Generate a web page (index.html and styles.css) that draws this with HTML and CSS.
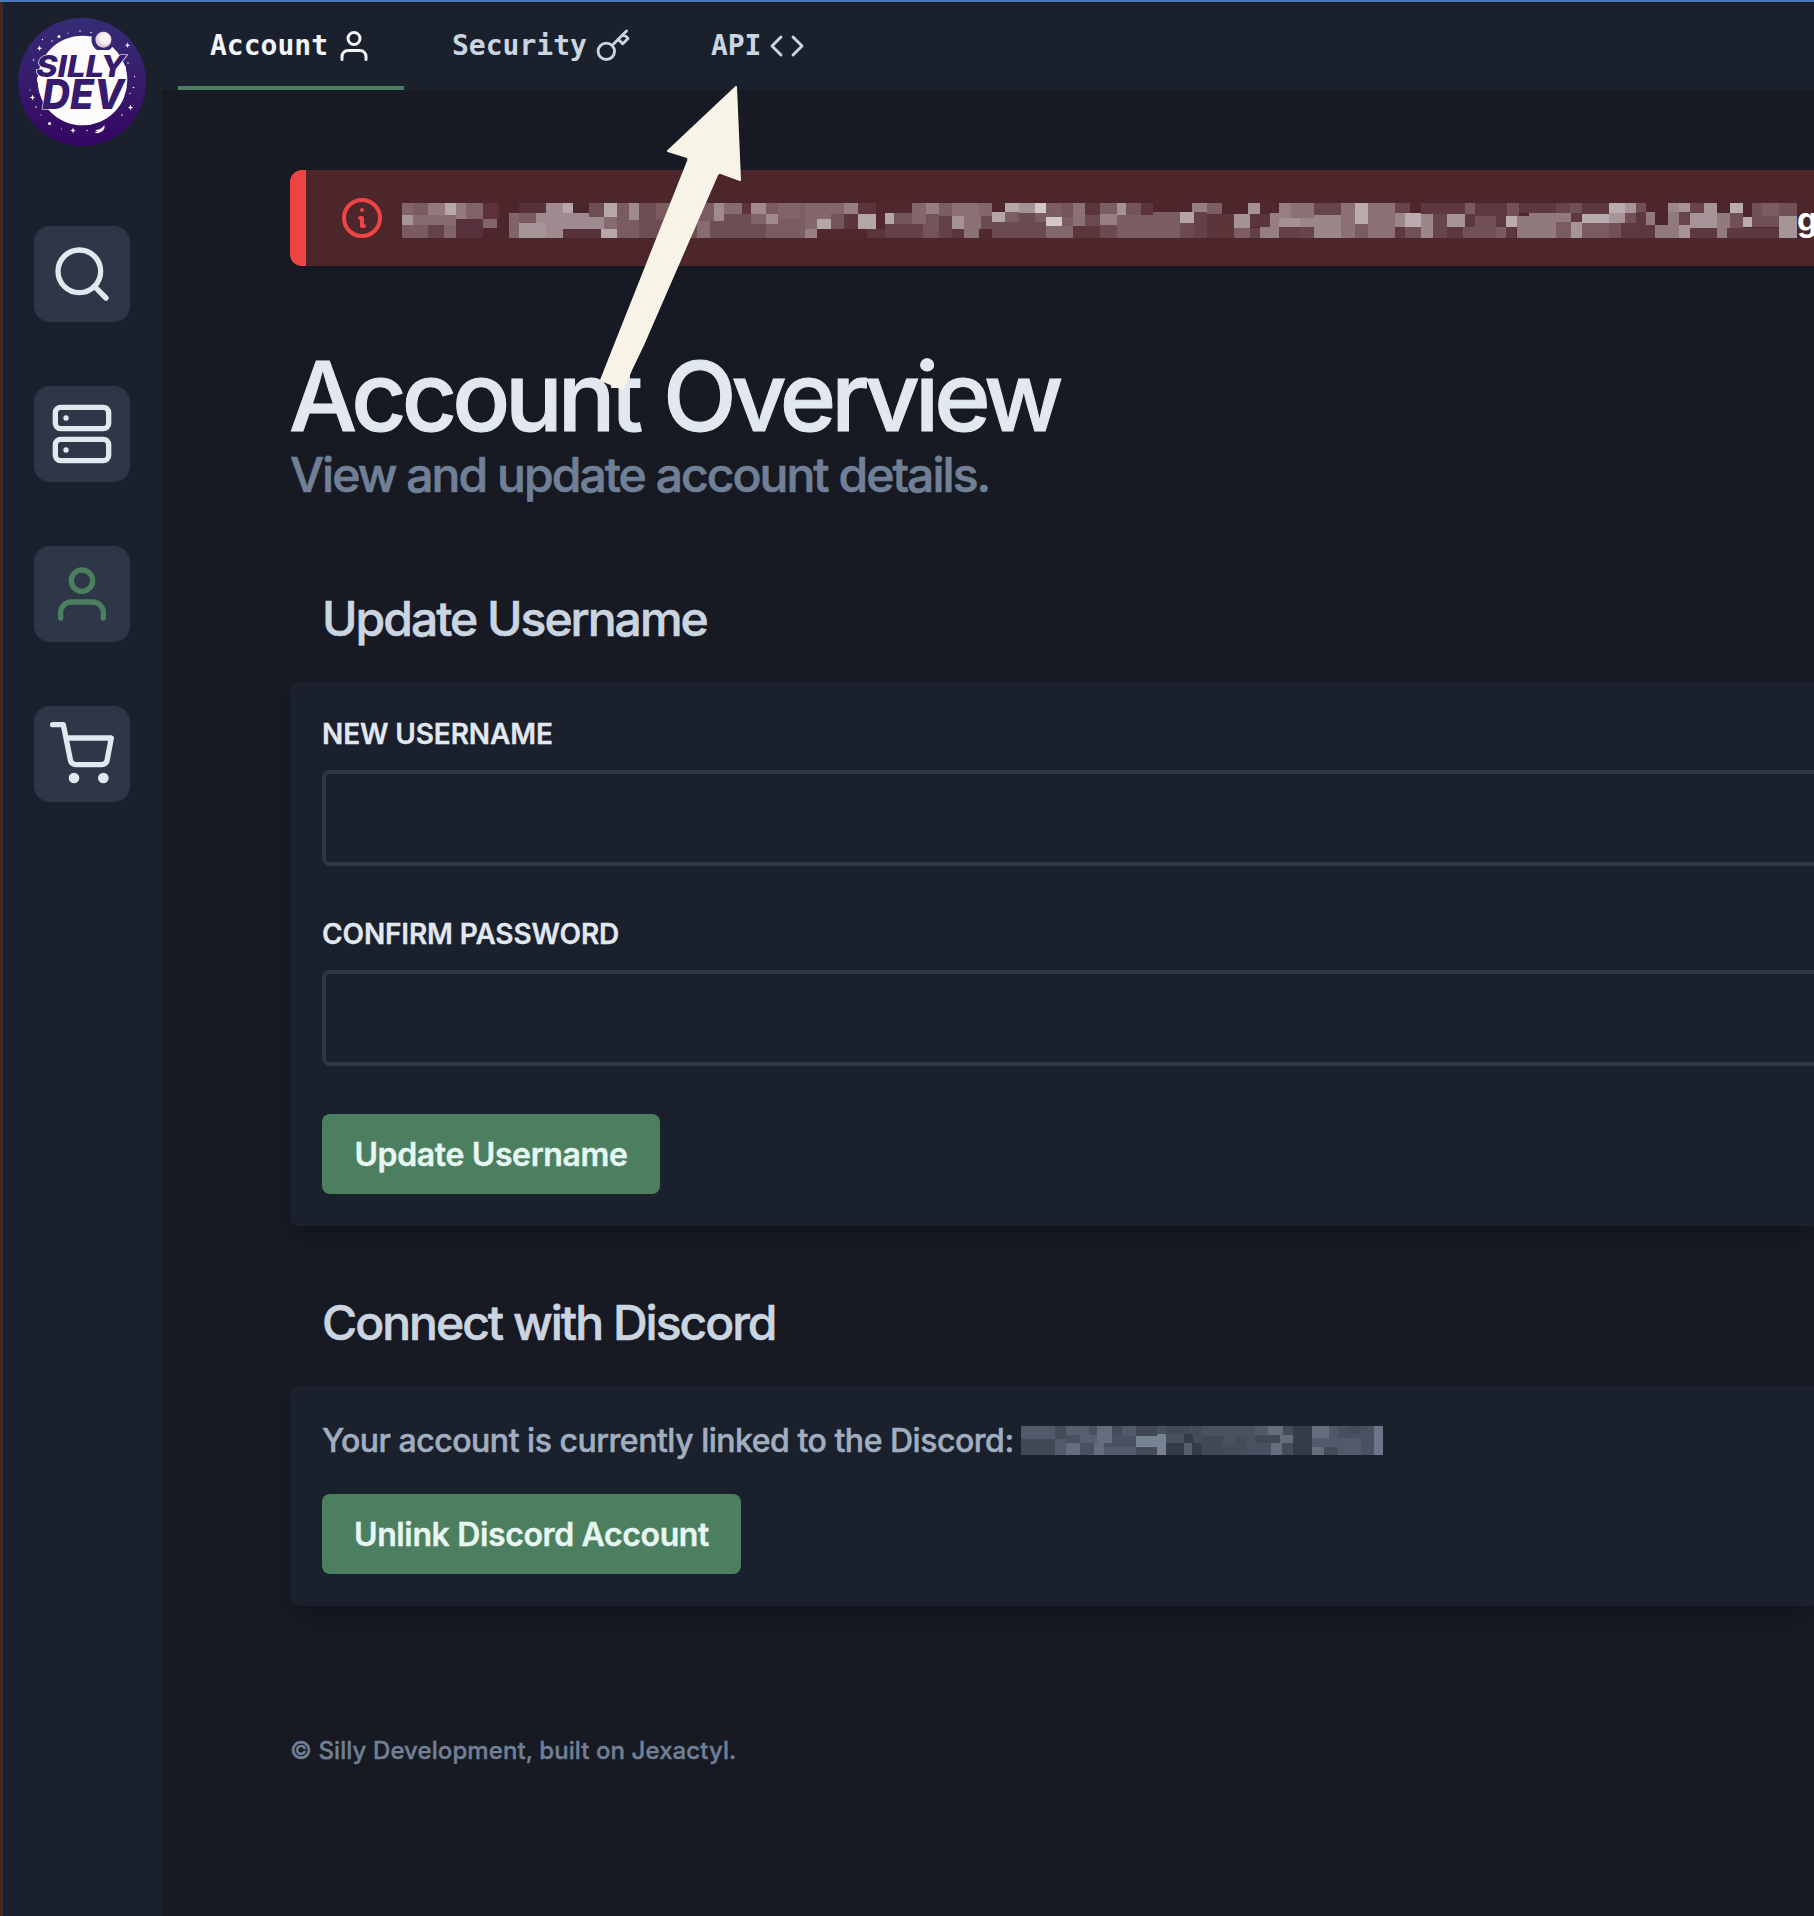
FILE: index.html
```html
<!DOCTYPE html>
<html lang="en">
<head>
<meta charset="utf-8">
<title>Account Overview</title>
<link rel="stylesheet" href="styles.css">
</head>
<body>
<div class="app">
  <aside class="sidebar">
    <svg class="logo" viewBox="18 18 128 128">
      <defs>
        <linearGradient id="sky" x1="0" y1="0" x2="0" y2="1"><stop offset="0" stop-color="#352d76"/><stop offset=".5" stop-color="#371b6c"/><stop offset="1" stop-color="#350563"/></linearGradient>
        <radialGradient id="moon" cx=".6" cy=".4" r=".6"><stop offset=".4" stop-color="#fbf5f6"/><stop offset="1" stop-color="#dcc3cf"/></radialGradient>
      </defs>
      <circle cx="82" cy="82" r="64" fill="url(#sky)"/>
      <circle cx="82.5" cy="80.5" r="44.8" fill="#fdfafc"/>
      <circle cx="103" cy="40" r="11.5" fill="#352a74"/>
      <circle cx="103.4" cy="39.7" r="8" fill="url(#moon)"/>
      <path d="M45 56L54 50H112L126 67V77L115 98L100 118H62L48 109L57 106L60 82H37V77H55L40 68Z" fill="#fdfafc"/>
      <g class="logo-text">
        <text transform="translate(36 76.500)" font-size="30" textLength="89" lengthAdjust="spacingAndGlyphs">SILLY</text>
        <text transform="translate(42 108.800)" font-size="41" textLength="82" lengthAdjust="spacingAndGlyphs">DEV</text>
      </g>
      <g fill="#f4effa">
        <circle cx="59" cy="36.500" r="1.600"/><circle cx="49.500" cy="123.500" r="1.600"/><circle cx="80" cy="31" r=".8"/><circle cx="91" cy="32.500" r=".8"/><circle cx="52" cy="41" r=".8"/><circle cx="42.500" cy="39.500" r=".7"/><circle cx="33.500" cy="60" r=".8"/><circle cx="128" cy="63" r=".8"/><circle cx="134.500" cy="76.500" r=".7"/><circle cx="133.500" cy="87.500" r=".8"/><circle cx="130" cy="93.500" r=".7"/><circle cx="36" cy="107" r=".8"/><circle cx="41" cy="115" r=".6"/><circle cx="122" cy="115" r=".8"/><circle cx="30" cy="90" r=".6"/><circle cx="61.500" cy="129" r=".6"/><circle cx="87" cy="130.500" r=".7"/><circle cx="68" cy="33" r=".6"/>
        <path d="M39.500 45.500l.8 2 2 .8-2 .8-.8 2-.8-2-2-.8 2-.8zM127.500 42.500l.8 2 2 .8-2 .8-.8 2-.8-2-2-.8 2-.8zM32.500 94.500l.8 2.200 2 .8-2 .8-.8 2.200-.8-2.200-2-.8 2-.8zM130.500 104.500l.8 2.200 2 .8-2 .8-.8 2.200-.8-2.200-2-.8 2-.8zM73 127.500l.8 2.200 2 .8-2 .8-.8 2.200-.8-2.200-2-.8 2-.8zM104.500 125q1 6-6 8-2 .6-4-.8l3-.6-2.500-1.600q6 0 9.500-5z"/>
      </g>
    </svg>
    <nav class="side-nav">
      <a class="side-link"><svg class="icon" viewBox="0 0 24 24"><circle cx="11" cy="11" r="8"/><path d="M21 21l-4.350-4.350"/></svg></a>
      <a class="side-link"><svg class="icon" viewBox="0 0 24 24"><rect x="2" y="2" width="20" height="8" rx="2"/><rect x="2" y="14" width="20" height="8" rx="2"/><path d="M6 6h.01M6 18h.01"/></svg></a>
      <a class="side-link active"><svg class="icon" viewBox="0 0 24 24"><path d="M20 21v-2a4 4 0 0 0-4-4H8a4 4 0 0 0-4 4v2"/><circle cx="12" cy="7" r="4"/></svg></a>
      <a class="side-link"><svg class="icon" viewBox="0 0 24 24"><circle cx="9" cy="21" r="1"/><circle cx="20" cy="21" r="1"/><path d="M1 1h4l2.680 13.390a2 2 0 0 0 2 1.610h9.720a2 2 0 0 0 2-1.610L23 6H6"/></svg></a>
    </nav>
  </aside>
  <div class="page">
    <header class="tabs">
      <a class="tab current"><span>Account</span><svg class="icon" viewBox="0 0 24 24"><path d="M20 21v-2a4 4 0 0 0-4-4H8a4 4 0 0 0-4 4v2"/><circle cx="12" cy="7" r="4"/></svg></a>
      <a class="tab"><span>Security</span><svg class="icon thin" viewBox="0 0 24 24"><path d="M21 2l-2 2m-7.610 7.610a5.500 5.500 0 1 1-7.778 7.778 5.500 5.500 0 0 1 7.777-7.777zm0 0L15.500 7.500m0 0l3 3L22 7l-3-3m-3.500 3.500L19 4"/></svg></a>
      <a class="tab"><span>API</span><svg class="icon thin" viewBox="0 0 24 24"><path d="M16 18l6-6-6-6M8 6l-6 6 6 6"/></svg></a>
    </header>
    <main class="content">
      <div class="alert">
        <svg class="icon alert-icon" viewBox="0 0 24 24"><path d="M13 16h-1v-4h-1m1-4h.01M21 12a9 9 0 1 1-18 0 9 9 0 0 1 18 0z"/></svg>
        <svg class="censor-alert" viewBox="0 0 4185 105" shape-rendering="crispEdges">
          <g transform="translate(-366 -159)">
            <path fill="#80646a" d="M366 159H399V195H366zM687 189H717V264H687zM1494 159H1560V207H1494zM558 159H609V207H558zM492 225H528V264H492zM609 207H651V234H609zM1413 192H1458V222H1413z"/>
            <path fill="#7a5b60" d="M399 159H444V195H399zM366 225H444V264H366zM717 189H768V219H717zM1011 159H1077V264H1011zM1128 159H1302V213H1128zM1458 159H1494V192H1458zM1458 222H1560V264H1458zM1494 207H1560V222H1494z"/>
            <path fill="#937a7f" d="M444 159H495V195H444zM528 159H558V207H528z"/>
            <path fill="#b5a7aa" d="M495 159H528V195H495zM849 159H879V189H849zM972 159H1011V201H972zM963 237H1011V264H963z"/>
            <path fill="#5c3138" d="M609 159H657V207H609zM1386 159H1413V192H1386z"/>
            <path fill="#56303a" d="M528 207H609V264H528zM717 159H798V189H717zM849 237H963V264H849z"/>
            <path fill="#a79699" d="M366 195H399V225H366zM717 219H798V264H717z"/>
            <path fill="#866b70" d="M399 195H528V225H399zM972 201H1011V237H972zM1251 213H1290V264H1251zM1332 159H1386V192H1332z"/>
            <path fill="#64424a" d="M444 225H492V264H444z"/>
            <path fill="#9f8b8f" d="M768 189H798V219H768zM798 159H849V264H798zM849 189H927V237H849zM927 201H972V237H927zM1047 159H1077V210H1047zM1302 159H1332V213H1302zM1413 159H1458V192H1413zM1458 192H1494V222H1458z"/>
            <path fill="#6d4e53" d="M927 159H972V201H927zM1077 159H1128V264H1077zM1128 210H1251V264H1128zM1290 213H1332V264H1290zM1332 192H1413V264H1332zM1413 222H1458V264H1413z"/>
          </g>
          <g transform="translate(1194 -159)">
            <path fill="#7c5d62" d="M0 159H15V264H0zM417 159H456V198H417zM615 186H657V216H615zM705 189H738V216H705zM738 159H786V201H738zM786 201H819V228H786zM900 159H951V192H900zM951 195H1059V264H951zM1059 186H1140V264H1059zM1221 159H1266V192H1221zM1302 234H1350V264H1302z"/>
            <path fill="#83676b" d="M15 159H132V192H15zM15 192H51V237H15zM51 192H93V207H51zM336 159H378V222H336zM738 228H819V264H738zM537 159H576V198H537z"/>
            <path fill="#967f83" d="M132 159H174V192H132zM15 237H51V264H15zM378 159H417V192H378zM1176 159H1221V186H1176zM900 192H951V225H900zM1380 231H1437V264H1380zM1410 189H1437V231H1410zM1437 159H1473V204H1437z"/>
            <path fill="#b3a5a8" d="M51 207H93V237H51zM174 192H228V237H174zM255 189H282V222H255zM576 186H615V216H576zM615 159H657V186H615zM1140 186H1182V219H1140z"/>
            <path fill="#73545a" d="M93 192H132V237H93zM282 189H336V222H282zM369 222H417V264H369zM378 192H417V222H378zM786 159H819V201H786zM978 159H1023V195H978z"/>
            <path fill="#5c353b" d="M132 192H174V237H132zM201 237H255V264H201zM456 237H492V264H456zM819 228H900V264H819zM1023 159H1059V195H1023zM855 159H900V195H855zM1221 192H1302V264H1221zM1350 192H1410V231H1350zM174 159H228V192H174z"/>
            <path fill="#50272d" d="M51 237H201V264H51zM228 159H336V189H228zM537 237H576V264H537zM1380 159H1437V189H1380zM228 189H255V237H228z"/>
            <path fill="#644147" d="M255 222H369V264H255zM417 198H456V264H417zM1182 186H1221V264H1182zM1350 234H1380V264H1350zM1437 231H1542V264H1437z"/>
            <path fill="#6b4a50" d="M543 198H576V237H543zM576 216H738V264H576zM657 186H705V216H657zM855 195H900V228H855zM900 225H951V264H900zM1140 219H1182V264H1140zM1542 159H1560V195H1542z"/>
            <path fill="#8b7074" d="M456 159H537V198H456zM492 198H543V237H492zM492 237H537V264H492zM819 159H855V228H819zM1473 159H1542V204H1473z"/>
            <path fill="#a59296" d="M456 198H492V237H456zM657 159H705V189H657zM951 159H978V195H951zM1302 192H1350V234H1302zM1344 159H1380V192H1344zM1437 204H1542V231H1437zM1542 195H1560V264H1542z"/>
            <path fill="#d2c7ca" d="M705 159H738V189H705zM738 201H786V228H738z"/>
          </g>
          <g transform="translate(2694 -159)">
            <path fill="#8b7175" d="M0 159H42V204H0zM123 159H165V264H123zM204 159H285V264H204zM165 222H204V264H165z"/>
            <path fill="#9b868a" d="M0 204H42V231H0zM42 195H123V264H42zM285 189H315V231H285zM363 192H399V264H363zM1104 159H1137V186H1104z"/>
            <path fill="#67454b" d="M0 231H42V264H0zM42 159H123V195H42zM285 159H330V189H285zM768 159H810V189H768zM399 192H441V264H399zM1137 186H1170V225H1137zM1170 159H1212V189H1170z"/>
            <path fill="#795b60" d="M165 222H204V264H165zM768 216H813V264H768zM846 219H927V264H846zM588 231H618V264H588zM495 159H525V192H495zM1386 159H1437V198H1386z"/>
            <path fill="#b9abae" d="M165 159H204V222H165zM315 189H363V231H315zM846 192H927V219H846zM927 159H975V189H927zM1290 159H1329V189H1290zM1329 201H1356V231H1329zM618 198H651V231H618z"/>
            <path fill="#5d383e" d="M285 231H315V264H285zM399 159H495V192H399zM525 159H621V198H525zM495 192H525V231H495zM363 159H399V192H363zM441 231H489V264H441zM588 198H618V231H588zM618 231H648V264H618zM657 159H768V189H657zM813 189H846V216H813zM846 159H927V192H846zM963 219H1065V264H963zM1008 186H1038V219H1008zM1170 234H1251V264H1170zM1281 234H1443V264H1281z"/>
            <path fill="#715157" d="M315 231H363V264H315zM525 198H588V231H525zM489 231H588V264H489zM621 159H657V198H621zM810 159H846V189H810zM927 219H963V264H927zM975 189H1008V219H975zM1008 159H1038V186H1008zM1290 189H1329V234H1290zM1356 159H1386V198H1356zM1356 198H1437V231H1356zM1437 159H1491V198H1437z"/>
            <path fill="#a69498" d="M441 192H495V231H441zM813 216H846V264H813zM927 189H975V219H927zM975 159H1008V189H975zM1137 159H1170V186H1137zM1170 189H1251V234H1170zM1212 159H1251V189H1212zM1137 225H1170V264H1137zM1437 198H1491V264H1437z"/>
            <path fill="#917a7d" d="M651 198H768V264H651zM687 189H813V216H687zM1038 186H1065V225H1038zM1065 225H1137V264H1065zM1104 186H1137V225H1104zM1251 189H1290V234H1251zM1251 234H1281V264H1251z"/>
          </g>
        </svg>
        <span class="alert-text">g</span>
      </div>
      <h1 class="title">Account Overview</h1>
      <p class="subtitle">View and update account details.</p>

      <h2 class="section-title username-title">Update Username</h2>
      <section class="card">
        <label class="label">New Username</label>
        <div class="input"></div>
        <label class="label">Confirm Password</label>
        <div class="input"></div>
        <button class="button update">Update Username</button>
      </section>

      <h2 class="section-title discord-title">Connect with Discord</h2>
      <section class="card">
        <p class="linked"><span>Your account is currently linked to the Discord:</span>
          <svg class="censor-name" viewBox="123 168 1086 87" shape-rendering="crispEdges">
            <path fill="#485160" d="M123 168H1209V255H123z"/>
            <path fill="#525a69" d="M123 168H225V207H123zM225 207H258V255H225zM426 168H468V198H426zM372 231H468V255H372zM825 168H864V195H825zM996 204H1143V255H996zM1047 168H1074V204H1047z"/>
            <path fill="#404954" d="M123 207H225V255H123zM468 168H531V198H468zM558 168H630V192H558zM666 198H729V255H666zM825 195H900V219H825z"/>
            <path fill="#464b59" d="M225 168H258V207H225zM468 231H531V255H468zM396 168H426V198H396zM639 168H666V219H639zM1104 168H1143V192H1104zM1032 231H1074V255H1032zM906 219H939V255H906zM909 168H939V195H909zM729 222H801V255H729zM765 198H801V222H765z"/>
            <path fill="#575f6e" d="M258 168H327V195H258zM300 195H351V219H300zM612 219H636V255H612z"/>
            <path fill="#656d7c" d="M258 219H300V255H258zM351 168H396V219H351zM342 219H372V255H342zM864 168H909V195H864zM900 195H939V219H900zM873 219H906V255H873zM996 168H1047V204H996zM996 231H1032V255H996z"/>
            <path fill="#363b49" d="M558 219H612V255H558zM612 192H639V219H612zM636 219H666V255H636zM939 168H996V255H939z"/>
            <path fill="#768391" d="M468 198H531V231H468zM531 192H558V255H531z"/>
            <path fill="#6c7587" d="M1182 168H1209V255H1182z"/>
          </svg>
        </p>
        <button class="button unlink">Unlink Discord Account</button>
      </section>
      <footer class="footer">© Silly Development, built on Jexactyl.</footer>
    </main>
  </div>
</div>
<svg class="arrow" viewBox="590 80 160 320"><path d="M736 87L668 151L687 157Q689 158 688 161L601 380L623 389L631 370L643 345L717 175Q719 172 721 173L740 180Z" fill="#f7f3e6" stroke="#f7f3e6" stroke-width="2" stroke-linejoin="round"/></svg>
</body>
</html>
```
FILE: styles.css
```css
* { box-sizing: border-box; margin: 0; padding: 0; }
body {
  height: 1916px;
  overflow: hidden;
  background: #171923;
  font-family: Inter, "Liberation Sans", sans-serif;
  border-top: 2px solid #4a7ab5;
}
.app {
  display: flex;
  height: 1914px;
  border-left: 2px solid #55230d;
}
.icon {
  fill: none;
  stroke: currentColor;
  stroke-width: 2;
  stroke-linecap: round;
  stroke-linejoin: round;
  flex: none;
}

/* sidebar */
.sidebar {
  flex: none;
  width: 160px;
  background: #1a202c;
  box-shadow: inset 1px 0 #2a3340;
  padding-top: 16px;
  display: flex;
  flex-direction: column;
  align-items: center;
}
.logo { width: 128px; height: 128px; display: block; }
.logo-text {
  font-family: Inter, sans-serif;
  font-weight: 800;
  font-style: italic;
  fill: #371b6c;
  stroke: #fdfafc;
  stroke-width: 1.2;
  paint-order: stroke;
}
.side-nav { display: flex; flex-direction: column; gap: 64px; margin-top: 80px; }
.side-link {
  display: flex;
  align-items: center;
  justify-content: center;
  width: 96px;
  height: 96px;
  border-radius: 16px;
  background: #2d3748;
  color: #e2e8f0;
}
.side-link .icon { width: 64px; height: 64px; overflow: visible; }
.side-link.active { color: #4c7f60; }

/* top tabs */
.page { flex: 1; min-width: 0; }
.tabs {
  display: flex;
  gap: 16px;
  height: 88px;
  padding-left: 16px;
  background: #1a202c;
}
.tab {
  display: flex;
  align-items: flex-start;
  gap: 8px;
  padding: 26px 32px 0;
  font: bold 28px/36px "DejaVu Sans Mono", monospace;
  color: #cbd5e0;
}
.tab .icon { width: 36px; height: 36px; }
.tab .thin { stroke-width: 1.9; }
.tab.current { color: #f1f5f9; border-bottom: 4px solid #4c7f60; }

/* content */
.content { padding: 80px 0 0 128px; }
.alert {
  display: flex;
  align-items: center;
  height: 96px;
  padding-left: 32px;
  border-left: 16px solid #ef4444;
  border-radius: 12px 0 0 12px;
  background: #4c262b;
  overflow: hidden;
}
.alert-icon { width: 48px; height: 48px; color: #ef4444; margin-right: 16px; }
.censor-alert { flex: none; width: 1395px; height: 35px; margin-top: 5px; }
.alert-text { color: #fff; font-size: 32px; font-weight: 700; line-height: 48px; margin-top: 3px; }
.title {
  margin: 82px 0 0 -1px;
  font-size: 96px;
  line-height: 96px;
  font-weight: 500;
  color: #e2e8f0;
  white-space: nowrap;
  letter-spacing: -5px;
  word-spacing: 4px;
  -webkit-text-stroke: 1px currentColor;
}
.subtitle {
  margin-top: -1px;
  font-size: 48px;
  line-height: 64px;
  font-weight: 500;
  color: #718096;
  letter-spacing: -1.96px;
  -webkit-text-stroke: .7px currentColor;
}
.section-title {
  padding-left: 32px;
  margin-bottom: 31px;
  font-size: 48px;
  line-height: 64px;
  font-weight: 500;
  color: #cbd5e0;
  letter-spacing: -2px;
  -webkit-text-stroke: .6px currentColor;
}
.username-title { margin-top: 80px; }
.discord-title { margin-top: 65px; }
.card {
  display: flex;
  flex-direction: column;
  align-items: flex-start;
  padding: 32px 0 32px 32px;
  border-radius: 8px 0 0 8px;
  background: #1a202c;
  box-shadow: 0 20px 30px -6px rgba(0, 0, 0, .1), 0 8px 12px -4px rgba(0, 0, 0, .05);
}
.label {
  margin-bottom: 16px;
  font-size: 28px;
  line-height: 40px;
  font-weight: 600;
  color: #e2e8f0;
  text-transform: uppercase;
  letter-spacing: -.13px;
  -webkit-text-stroke: .3px currentColor;
}
.input {
  align-self: stretch;
  height: 96px;
  margin-bottom: 48px;
  border: 4px solid #2d3748;
  border-right: 0;
  border-radius: 8px 0 0 8px;
}
.button {
  height: 80px;
  padding-top: 2px;
  border: 0;
  border-radius: 8px;
  background: #4c7f60;
  color: #e6f6f1;
  font: 600 32px/78px Inter, sans-serif;
  letter-spacing: -.36px;
  white-space: nowrap;
  -webkit-text-stroke: .4px currentColor;
}
.update { width: 338px; }
.unlink { width: 419px; }
.linked {
  display: flex;
  height: 44px;
  margin-bottom: 32px;
  font-size: 32px;
  line-height: 46px;
  font-weight: 500;
  color: #a0aec0;
  white-space: nowrap;
  letter-spacing: -.48px;
  -webkit-text-stroke: .5px currentColor;
}
.linked span { width: 699px; }
.censor-name { width: 362px; height: 29px; margin-top: 8px; }
.footer {
  margin-top: 129px;
  font-size: 24px;
  line-height: 32px;
  font-weight: 500;
  color: #718096;
  letter-spacing: .08px;
  -webkit-text-stroke: .4px currentColor;
}

/* annotation arrow over the page */
.arrow {
  position: absolute;
  left: 590px;
  top: 80px;
  width: 160px;
  height: 320px;
}
```
